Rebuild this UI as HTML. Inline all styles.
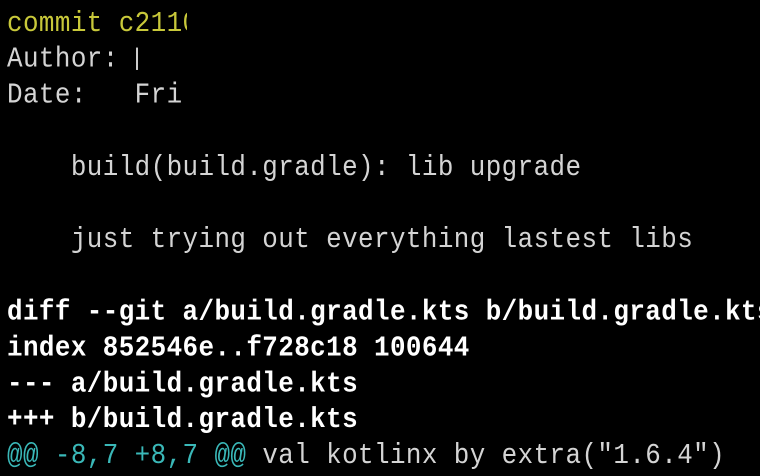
<!DOCTYPE html>
<html><head><meta charset="utf-8"><style>
html,body{margin:0;padding:0;background:#000;width:760px;height:476px;overflow:hidden}
pre{margin:0;padding:0 0 0 7px;font-family:"Liberation Mono","DejaVu Sans Mono",monospace;font-size:25.9px;letter-spacing:0.42px;line-height:32.2px;color:#d4d4d4;white-space:pre;transform:scaleY(1.12);transform-origin:0 0;position:relative;top:5px}
.y{color:#c8c83a}
.b{color:#fff;font-weight:bold}
.c{color:#3ab8b8}
.clip{display:inline-block;overflow:hidden;vertical-align:top;height:32px}
.bar{display:inline-block;width:2px;height:20px;background:#ccc;vertical-align:-3px;margin-left:17px}
</style></head><body><pre><span class="clip y" style="width:180px">commit c2110</span>
Author:<span class="bar"></span>
<span class="clip" style="width:175px">Date:   Fri</span>

    build(build.gradle): lib upgrade

    just trying out everything lastest libs

<span class="b">diff --git a/build.gradle.kts b/build.gradle.kts</span>
<span class="b">index 852546e..f728c18 100644</span>
<span class="b">--- a/build.gradle.kts</span>
<span class="b">+++ b/build.gradle.kts</span>
<span class="c">@@ -8,7 +8,7 @@</span> val kotlinx by extra("1.6.4")</pre></body></html>
